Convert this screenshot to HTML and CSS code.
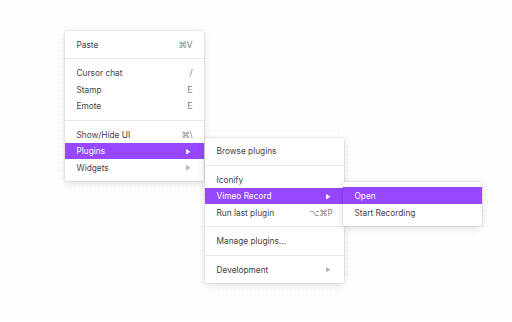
FILE: index.html
```html
<!DOCTYPE html>
<html>
<head>
<meta charset="utf-8">
<link rel="stylesheet" href="styles.css">
</head>
<body>
<div class="canvas">
  <div class="menu menu-main">
    <div class="item"><span>Paste</span><span class="key">⌘V</span></div>
    <div class="sep"></div>
    <div class="item"><span>Cursor chat</span><span class="key">/</span></div>
    <div class="item"><span>Stamp</span><span class="key">E</span></div>
    <div class="item"><span>Emote</span><span class="key">E</span></div>
    <div class="sep"></div>
    <div class="item"><span>Show/Hide UI</span><span class="key">⌘\</span></div>
    <div class="item active"><span>Plugins</span><svg class="arrow" viewBox="0 0 5 6"><path d="M0 0L5 3L0 6Z"/></svg></div>
    <div class="item"><span>Widgets</span><svg class="arrow" viewBox="0 0 5 6"><path d="M0 0L5 3L0 6Z"/></svg></div>
  </div>
  <div class="menu menu-plugins">
    <div class="item"><span>Browse plugins</span></div>
    <div class="sep"></div>
    <div class="item"><span>Iconify</span></div>
    <div class="item active"><span>Vimeo Record</span><svg class="arrow" viewBox="0 0 5 6"><path d="M0 0L5 3L0 6Z"/></svg></div>
    <div class="item"><span>Run last plugin</span><span class="key">⌥⌘P</span></div>
    <div class="sep"></div>
    <div class="item"><span>Manage plugins...</span></div>
    <div class="sep"></div>
    <div class="item"><span>Development</span><svg class="arrow" viewBox="0 0 5 6"><path d="M0 0L5 3L0 6Z"/></svg></div>
  </div>
  <div class="menu menu-vimeo">
    <div class="item active"><span>Open</span></div>
    <div class="item"><span>Start Recording</span></div>
  </div>
</div>
</body>
</html>
```

FILE: styles.css
```css
html, body {
  margin: 0;
  padding: 0;
}
body {
  width: 512px;
  height: 322px;
  overflow: hidden;
  background-color: #ffffff;
  font-family: Inter, "Noto Sans", "DejaVu Sans", sans-serif;
}
.canvas {
  position: relative;
  width: 512px;
  height: 322px;
  background-image: radial-gradient(circle at 2.5px 2.5px, #e0e0e0 0.6px, transparent 1px);
  background-size: 8px 8px;
}
.menu {
  position: absolute;
  width: 139px;
  padding: 5px 0;
  background: #ffffff;
  border-radius: 2px;
  box-shadow: 0 0 0 0.5px rgba(0,0,0,0.1), 0 2px 9px rgba(0,0,0,0.15);
  box-sizing: border-box;
}
.menu-main { left: 65px; top: 31px; }
.menu-plugins { left: 205px; top: 137.7px; }
.menu-vimeo { left: 343px; top: 182.3px; }
.item {
  height: 16.7px;
  display: flex;
  align-items: center;
  justify-content: space-between;
  padding: 0 11.5px 0 11.5px;
  font-size: 8.3px;
  color: #444444;
  padding-top: 0.6px;
  box-sizing: border-box;
}
.key {
  color: #7e7e7e;
  font-family: "DejaVu Sans", Inter, sans-serif;
  font-size: 8.3px;
}
.arrow {
  width: 4.5px;
  height: 5.5px;
  fill: #b4b4b4;
  margin-right: 2.5px;
}
.item.active {
  background: #9747ff;
  color: #ffffff;
}
.item.active .arrow {
  fill: #ffffff;
}
.sep {
  height: 1px;
  background: #e8e8e8;
  margin: 5.3px 0;
}
```
